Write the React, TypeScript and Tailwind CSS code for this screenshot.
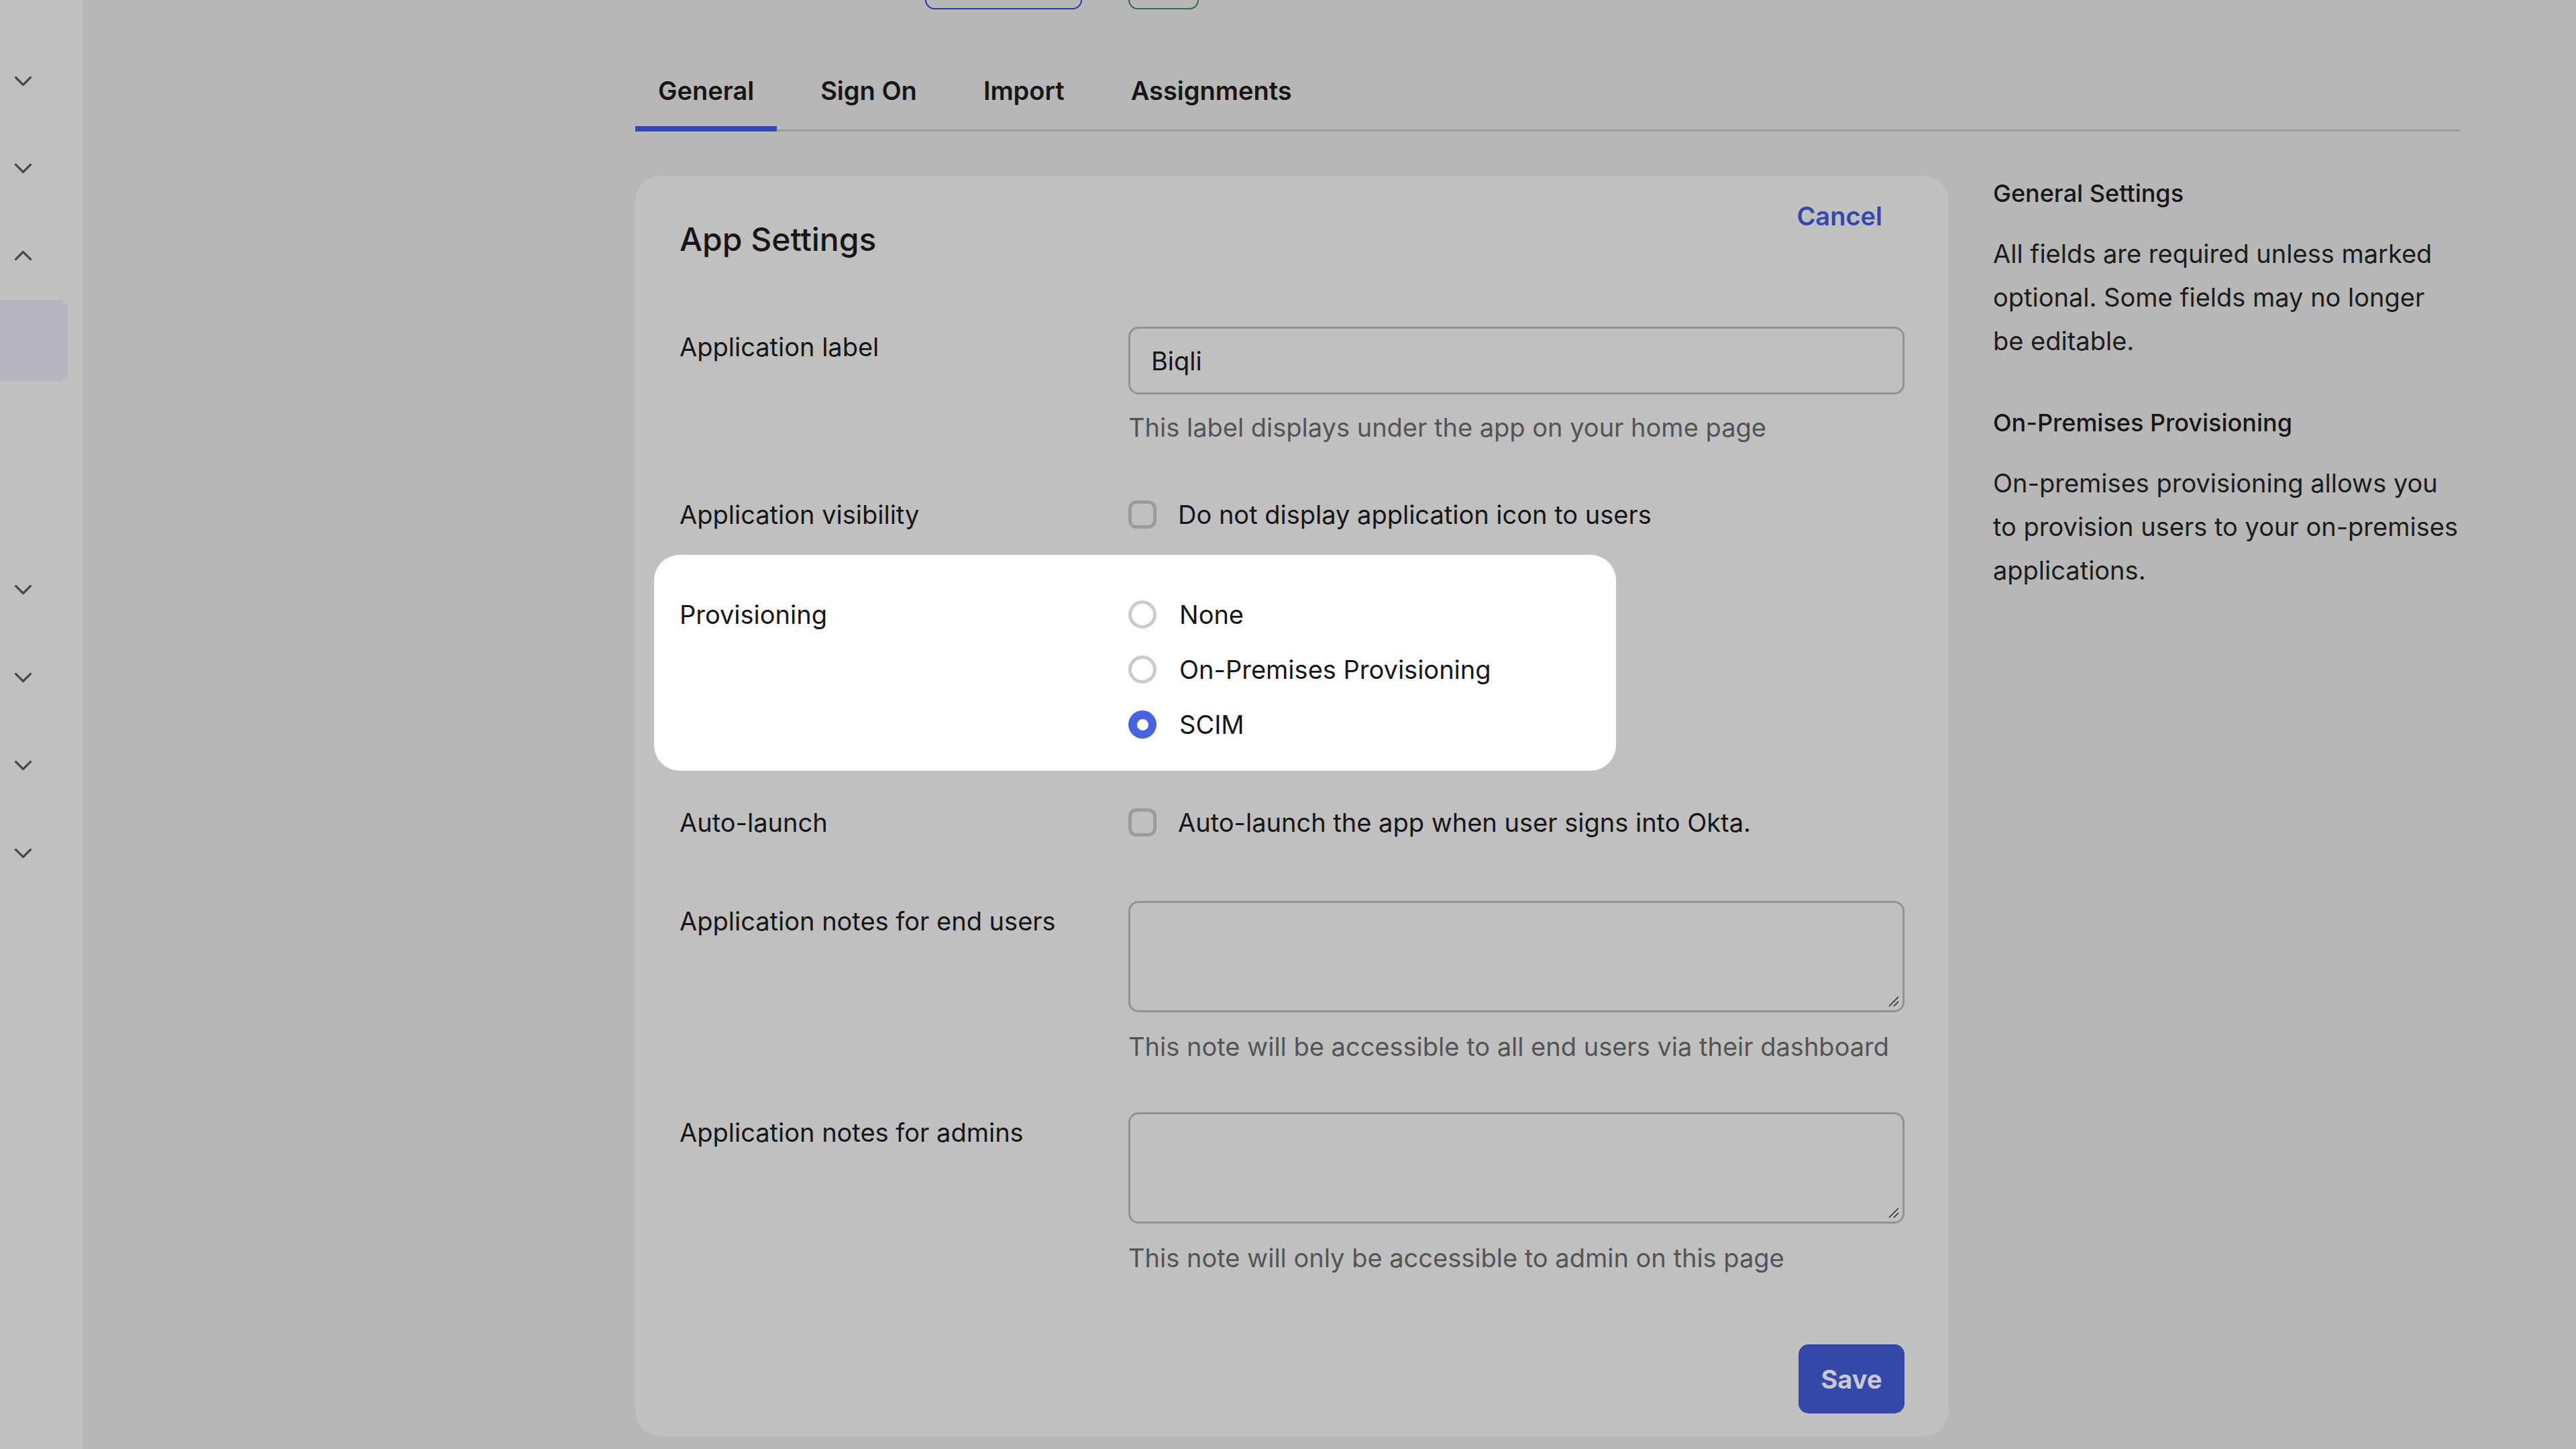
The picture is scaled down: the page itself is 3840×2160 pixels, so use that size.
import { useState } from "react"

const Chevron = ({ up = false }: { up?: boolean }) => (
    <svg width="27" height="16" viewBox="0 0 27 16" fill="none">
        <polyline
            points={up ? "2.5,13.5 13.5,2.5 24.5,13.5" : "2.5,2.5 13.5,13.5 24.5,2.5"}
            stroke="#4a4a4a"
            strokeWidth="3.2"
            strokeLinecap="round"
            strokeLinejoin="round"
        />
    </svg>
)

const Sidebar = () => {
    return (
        <aside className="w-[123px] shrink-0 bg-[#c0c0c0] pt-[56px]">
            {[false, false, true].map((up, i) => (
                <div key={i} className="flex h-[130px] items-center pl-[21px]">
                    <Chevron up={up} />
                </div>
            ))}
            <div className="mt-[1px] h-[121px] w-[101px] rounded-r-[14px] bg-[#b5b6bf]" />
            <div className="h-[245px]" />
            {[0, 1, 2, 3].map((i) => (
                <div key={i} className="flex h-[131px] items-center pl-[21px]">
                    <Chevron />
                </div>
            ))}
        </aside>
    )
}

const tabs = ["General", "Sign On", "Import", "Assignments"]

const Checkbox = () => (
    <span className="h-[42px] w-[42px] shrink-0 rounded-[12px] border-[5px] border-[#9b9b9b]" />
)

const Radio = ({ checked }: { checked: boolean }) => (
    checked ? (
        <span className="flex h-[42px] w-[42px] shrink-0 items-center justify-center rounded-full bg-[#4862e0]">
            <span className="h-[17px] w-[17px] rounded-full bg-white" />
        </span>
    ) : (
        <span className="h-[42px] w-[42px] shrink-0 rounded-full border-[5px] border-[#cbcbcb] bg-white" />
    )
)

const NotesField = () => (
    <div className="relative">
        <textarea className="block h-[166px] w-full resize-none rounded-[15px] border-[3px] border-[#929292] bg-transparent" />
        {/* resize grip */}
        <svg className="absolute bottom-[8px] right-[8px]" width="18" height="18" viewBox="0 0 18 18" fill="none">
            <line x1="3" y1="17" x2="17" y2="3" stroke="#2a2a2a" strokeWidth="1.6" />
            <line x1="10" y1="17" x2="17" y2="10" stroke="#2a2a2a" strokeWidth="1.6" />
        </svg>
    </div>
)

export default function App() {
    const [tab] = useState("General")
    const [provisioning] = useState("SCIM")

    return (
        <div className="flex min-h-screen w-full bg-[#b7b7b7] font-['Inter','Noto_Sans',sans-serif] text-[#161616]">
            <Sidebar />

            <main className="flex-1 pl-[824px] pr-[172px]">
                {/* header buttons scrolled out of view */}
                <div className="flex h-[14px] items-end gap-[69px] overflow-hidden pl-[432px]">
                    <div className="h-[60px] w-[234px] shrink-0 rounded-[14px] border-2 border-[#2638b8]" />
                    <div className="h-[60px] w-[105px] shrink-0 rounded-[14px] border-2 border-[#2f6e34]" />
                </div>

                <nav className="mt-[68px] flex gap-[31px] border-b-[3px] border-[#9b9b9b]">
                    {tabs.map((t) => (
                        <div
                            key={t}
                            className={`-mb-[3px] flex h-[114px] items-center border-b-[8px] px-[34px] text-[38px] font-semibold ${t === tab ? "border-[#3247b4]" : "border-transparent"}`}
                        >
                            {t}
                        </div>
                    ))}
                </nav>

                <div className="mt-[66px] flex gap-[66px]">
                    <section className="w-[1958px] shrink-0 rounded-[38px] bg-[#c0c0c0] px-[66px] pb-[34px] pt-[66px] text-[38px] leading-[46px]">
                        <div className="flex items-start justify-between">
                            <h2 className="text-[48px] font-medium leading-[58px]">App Settings</h2>
                            <button className="-mt-[42px] h-[72px] pl-[36px] pr-[33px] text-[38px] font-semibold text-[#3446b0]">
                                Cancel
                            </button>
                        </div>

                        <div className="mt-[101px] grid grid-cols-[669px_1fr]">
                            <div className="pt-[7px]">Application label</div>
                            <div>
                                <div className="flex h-[101px] items-center rounded-[15px] border-[3px] border-[#929292] pl-[31px]">
                                    Biqli
                                </div>
                                <p className="mt-[26px] text-[#545457]">This label displays under the app on your home page</p>
                            </div>
                        </div>

                        <div className="mt-[84px] grid grid-cols-[669px_1fr]">
                            <div>Application visibility</div>
                            <div className="flex h-[46px] items-center gap-[32px]">
                                <Checkbox />
                                <span>Do not display application icon to users</span>
                            </div>
                        </div>

                        <div className="-mx-[38px] mt-[37px] grid w-[1434px] grid-cols-[669px_1fr] rounded-[38px] bg-white pb-[46px] pl-[38px] pt-[66px]">
                            <div>Provisioning</div>
                            <div className="flex flex-col gap-[36px]">
                                {["None", "On-Premises Provisioning", "SCIM"].map((o) => (
                                    <div key={o} className="flex h-[46px] items-center gap-[34px]">
                                        <Radio checked={o === provisioning} />
                                        <span>{o}</span>
                                    </div>
                                ))}
                            </div>
                        </div>

                        <div className="mt-[54px] grid grid-cols-[669px_1fr]">
                            <div>Auto-launch</div>
                            <div className="flex h-[46px] items-center gap-[32px]">
                                <Checkbox />
                                <span>Auto-launch the app when user signs into Okta.</span>
                            </div>
                        </div>

                        <div className="mt-[94px] grid grid-cols-[669px_1fr]">
                            <div className="pt-[7px]">Application notes for end users</div>
                            <div>
                                <NotesField />
                                <p className="mt-[28px] text-[#545457]">This note will be accessible to all end users via their dashboard</p>
                            </div>
                        </div>

                        <div className="mt-[75px] grid grid-cols-[669px_1fr]">
                            <div className="pt-[7px]">Application notes for admins</div>
                            <div>
                                <NotesField />
                                <p className="mt-[28px] text-[#545457]">This note will only be accessible to admin on this page</p>
                            </div>
                        </div>

                        <div className="mt-[106px] flex justify-end">
                            <button className="h-[103px] w-[158px] rounded-[15px] bg-[#3548a8] text-[38px] font-bold text-[#c8c9d2]">
                                Save
                            </button>
                        </div>
                    </section>

                    <aside className="w-[696px] shrink-0 pt-[3px]">
                        <h3 className="text-[36px] font-medium leading-[46px]">General Settings</h3>
                        <p className="mt-[35px] text-[38px] leading-[65px] text-[#1c1c1c]">
                            All fields are required unless marked optional. Some fields may no longer be editable.
                        </p>
                        <h3 className="mt-[66px] text-[36px] font-medium leading-[46px]">On-Premises Provisioning</h3>
                        <p className="mt-[35px] text-[38px] leading-[65px] text-[#1c1c1c]">
                            On-premises provisioning allows you to provision users to your on-premises applications.
                        </p>
                    </aside>
                </div>
            </main>
        </div>
    )
}
